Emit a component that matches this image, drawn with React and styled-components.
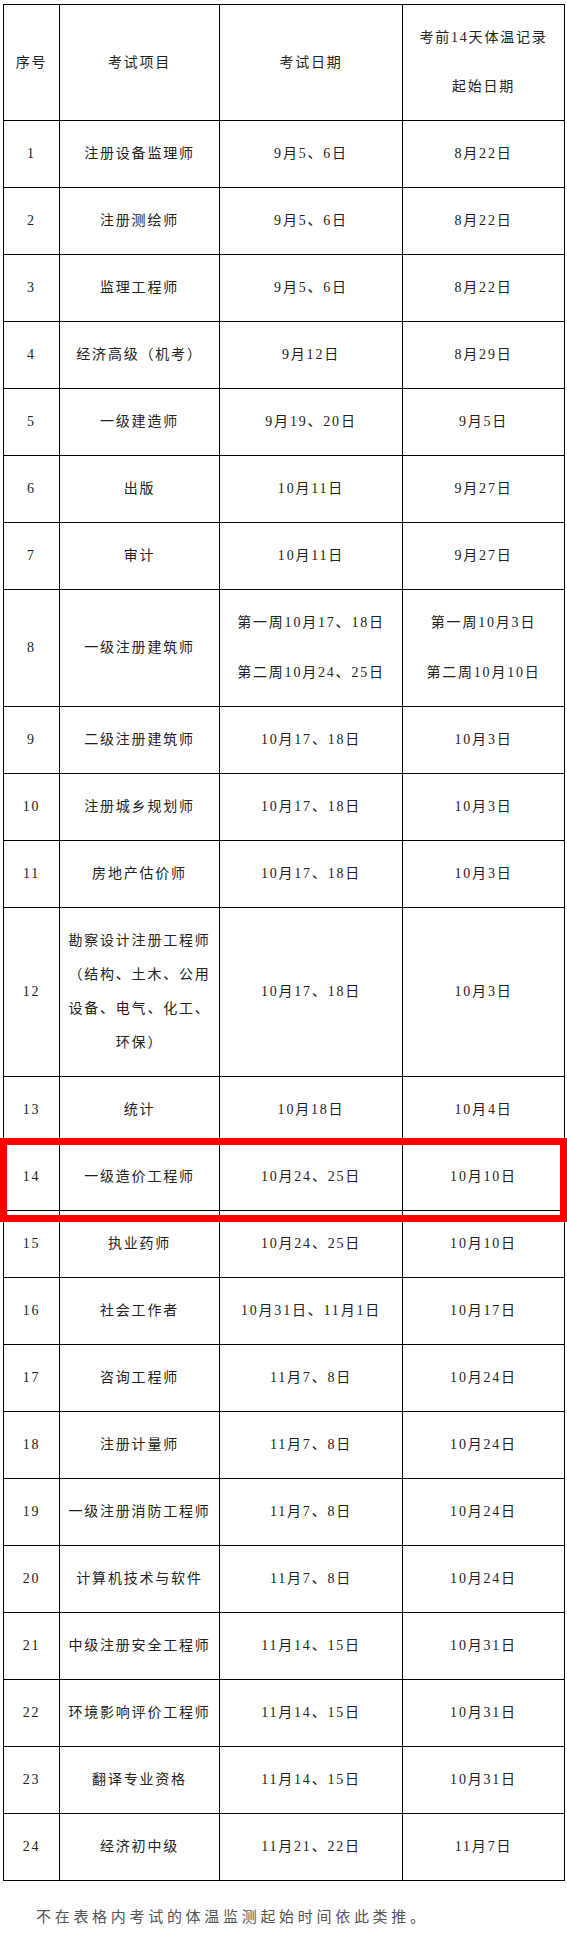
import React from "react";
import styled, { createGlobalStyle } from "styled-components";

const GlobalStyle = createGlobalStyle`
  html, body {
    margin: 0;
    padding: 0;
    background: #fff;
  }
  body {
    font-family: "Liberation Serif", "Noto Sans CJK SC", serif;
  }
`;

const Page = styled.div`
  position: relative;
  width: 567px;
  padding: 4px 0 0 3px;
  box-sizing: border-box;
`;

const Table = styled.table`
  width: 561px;
  border-collapse: collapse;
  table-layout: fixed;
  color: #222;
  font-size: 14px;
  letter-spacing: 1.8px;
`;

const Col = styled.col`
  width: ${(p) => p.$w}px;
`;

const Cell = styled.td`
  border: 1px solid #000;
  padding: 16px 6px;
  text-align: center;
  vertical-align: middle;
  line-height: 34px;
  white-space: nowrap;
`;

const HeadCell = styled(Cell).attrs({ as: "th" })`
  font-weight: normal;
`;

const Stack = styled.div`
  display: flex;
  flex-direction: column;
  align-items: center;
  gap: ${(p) => p.$gap}px;
`;

const Highlight = styled.div`
  position: absolute;
  left: 0;
  top: 1138px;
  width: 567px;
  height: 84px;
  box-sizing: border-box;
  border: 7px solid #ff0000;
  pointer-events: none;
`;

const Note = styled.p`
  margin: 21px 0 0 33px;
  font-size: 15px;
  line-height: 30px;
  letter-spacing: 3.7px;
  color: #555;
`;

const rows = [
  ["1", "注册设备监理师", "9月5、6日", "8月22日"],
  ["2", "注册测绘师", "9月5、6日", "8月22日"],
  ["3", "监理工程师", "9月5、6日", "8月22日"],
  ["4", "经济高级（机考）", "9月12日", "8月29日"],
  ["5", "一级建造师", "9月19、20日", "9月5日"],
  ["6", "出版", "10月11日", "9月27日"],
  ["7", "审计", "10月11日", "9月27日"],
  [
    "8",
    "一级注册建筑师",
    { gap: 16, lines: ["第一周10月17、18日", "第二周10月24、25日"] },
    { gap: 16, lines: ["第一周10月3日", "第二周10月10日"] },
  ],
  ["9", "二级注册建筑师", "10月17、18日", "10月3日"],
  ["10", "注册城乡规划师", "10月17、18日", "10月3日"],
  ["11", "房地产估价师", "10月17、18日", "10月3日"],
  [
    "12",
    { gap: 0, lines: ["勘察设计注册工程师", "（结构、土木、公用", "设备、电气、化工、", "环保）"] },
    "10月17、18日",
    "10月3日",
  ],
  ["13", "统计", "10月18日", "10月4日"],
  ["14", "一级造价工程师", "10月24、25日", "10月10日"],
  ["15", "执业药师", "10月24、25日", "10月10日"],
  ["16", "社会工作者", "10月31日、11月1日", "10月17日"],
  ["17", "咨询工程师", "11月7、8日", "10月24日"],
  ["18", "注册计量师", "11月7、8日", "10月24日"],
  ["19", "一级注册消防工程师", "11月7、8日", "10月24日"],
  ["20", "计算机技术与软件", "11月7、8日", "10月24日"],
  ["21", "中级注册安全工程师", "11月14、15日", "10月31日"],
  ["22", "环境影响评价工程师", "11月14、15日", "10月31日"],
  ["23", "翻译专业资格", "11月14、15日", "10月31日"],
  ["24", "经济初中级", "11月21、22日", "11月7日"],
];

const CellContent = ({ value }) => {
  if (value && value.lines) {
    return (
      <Stack $gap={value.gap}>
        {value.lines.map((l) => (
          <span key={l}>{l}</span>
        ))}
      </Stack>
    );
  }
  return value;
};

const App = () => (
  <Page>
    <GlobalStyle />
    <Table>
      <colgroup>
        <Col $w={56} />
        <Col $w={160} />
        <Col $w={183} />
        <Col $w={162} />
      </colgroup>
      <thead>
        <tr>
          <HeadCell>序号</HeadCell>
          <HeadCell>考试项目</HeadCell>
          <HeadCell>考试日期</HeadCell>
          <HeadCell>
            <CellContent value={{ gap: 15, lines: ["考前14天体温记录", "起始日期"] }} />
          </HeadCell>
        </tr>
      </thead>
      <tbody>
        {rows.map((r) => (
          <tr key={r[0]}>
            {r.map((v, i) => (
              <Cell key={i}>
                <CellContent value={v} />
              </Cell>
            ))}
          </tr>
        ))}
      </tbody>
    </Table>
    <Highlight />
    <Note>不在表格内考试的体温监测起始时间依此类推。</Note>
  </Page>
);

export default App;
